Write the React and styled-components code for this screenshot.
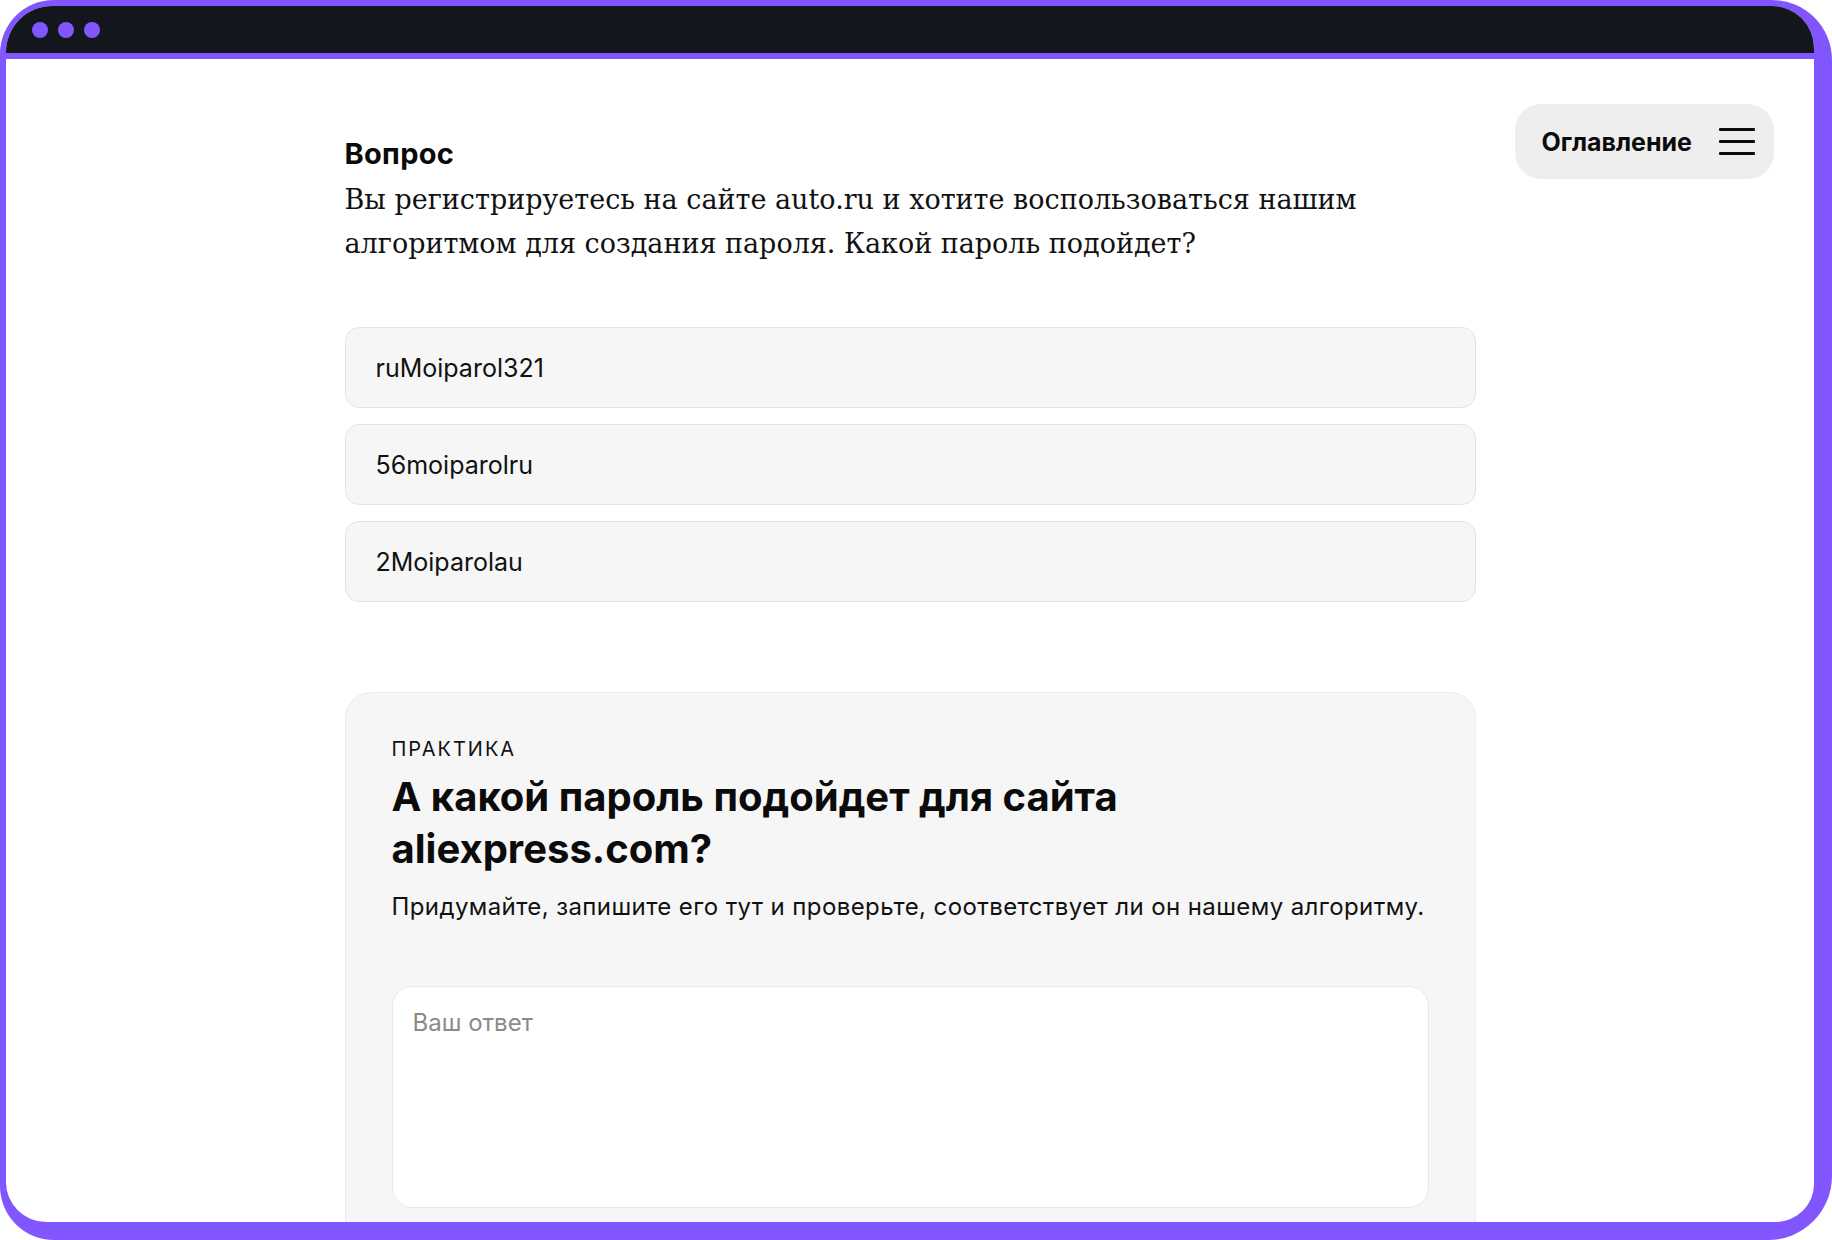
import React from 'react'
import styled, { createGlobalStyle } from 'styled-components'

const purple = '#8256ff'

const GlobalStyle = createGlobalStyle`
    html, body {
        margin: 0;
        padding: 0;
        background: #ffffff;
    }
    * {
        box-sizing: border-box;
    }
`

const options = ['ruMoiparol321', '56moiparolru', '2Moiparolau']

const App = () => {
  return (
    <>
      <GlobalStyle />
      <Frame>
        <Window>
          <TitleBar>
            <Dot />
            <Dot />
            <Dot />
          </TitleBar>

          <Page>
            <TocButton type="button">
              Оглавление
              <Burger>
                <span />
                <span />
                <span />
              </Burger>
            </TocButton>

            <Column>
              <Heading>Вопрос</Heading>
              <Prompt>
                Вы регистрируетесь на сайте auto.ru и хотите воспользоваться нашим
                алгоритмом для создания пароля. Какой пароль подойдет?
              </Prompt>

              <Options>
                {options.map((o) => (
                  <Option key={o}>{o}</Option>
                ))}
              </Options>

              <Practice>
                <Eyebrow>Практика</Eyebrow>
                <PracticeTitle>
                  А какой пароль подойдет для сайта
                  <br />
                  aliexpress.com?
                </PracticeTitle>
                <PracticeText>
                  Придумайте, запишите его тут и проверьте, соответствует ли он нашему алгоритму.
                </PracticeText>
                <Answer placeholder="Ваш ответ" />
                <Spacer />
              </Practice>
            </Column>
          </Page>
        </Window>
      </Frame>
    </>
  )
}

const Frame = styled.div`
    width: 1832px;
    height: 1240px;
    padding: 6px 18px 18px 6px;
    background: ${purple};
    border-radius: 54px 60px 64px 54px;
`
const Window = styled.div`
    display: flex;
    flex-direction: column;
    height: 100%;
    background: #ffffff;
    border-radius: 46px 42px 38px 40px;
    overflow: hidden;
`
const TitleBar = styled.div`
    flex: none;
    display: flex;
    align-items: center;
    gap: 10px;
    height: 53px;
    padding-left: 26px;
    background: #13161d;
    border-bottom: 6px solid ${purple};
`
const Dot = styled.span`
    width: 16px;
    height: 16px;
    border-radius: 50%;
    background: ${purple};
`
const Page = styled.div`
    position: relative;
    flex: 1;
    overflow: hidden;
    padding-top: 78px;
`
const TocButton = styled.button`
    position: absolute;
    top: 45px;
    right: 40px;
    display: flex;
    align-items: center;
    gap: 27px;
    height: 75px;
    padding: 0 19px 0 26px;
    border: none;
    border-radius: 26px;
    background: #eeeeee;
    color: #0b0b0b;
    font-family: Inter, "Liberation Sans", sans-serif;
    font-size: 25px;
    font-weight: 700;
    cursor: pointer;
`
const Burger = styled.span`
    display: flex;
    flex-direction: column;
    gap: 9px;
    width: 36px;
    span{
        height: 3px;
        background: #0b0b0b;
        border-radius: 1px;
    }
`
const Column = styled.div`
    width: 1131px;
    margin: 0 auto;
    font-family: Inter, "Liberation Sans", sans-serif;
    color: #0b0b0b;
`
const Heading = styled.h2`
    margin: 0;
    font-size: 29px;
    line-height: 34px;
    font-weight: 700;
    letter-spacing: 0.3px;
`
const Prompt = styled.p`
    margin: 7px 0 0;
    font-family: "DejaVu Serif", "Liberation Serif", serif;
    font-size: 27px;
    line-height: 44px;
    color: #111111;
`
const Options = styled.div`
    display: grid;
    gap: 16px;
    margin-top: 61px;
`
const Option = styled.div`
    display: flex;
    align-items: center;
    height: 81px;
    padding: 0 30px;
    background: #f6f6f6;
    border: 1px solid #e4e4e4;
    border-radius: 14px;
    font-size: 25px;
    color: #111111;
`
const Practice = styled.section`
    margin-top: 90px;
    padding: 44px 46px 46px;
    background: #f6f6f6;
    border: 1px solid #ececec;
    border-radius: 26px;
`
const Eyebrow = styled.div`
    font-size: 20px;
    line-height: 24px;
    letter-spacing: 0.1em;
    text-transform: uppercase;
    color: #111111;
`
const PracticeTitle = styled.h3`
    margin: 10px 0 0;
    font-size: 40px;
    line-height: 52px;
    font-weight: 700;
`
const PracticeText = styled.p`
    margin: 16px 0 0;
    font-size: 24px;
    line-height: 32px;
    letter-spacing: 0.4px;
    color: #111111;
`
const Answer = styled.textarea`
    display: block;
    width: 100%;
    height: 222px;
    margin-top: 63px;
    padding: 20px 20px;
    background: #ffffff;
    border: 1px solid #e8e8e8;
    border-radius: 20px;
    font-family: Inter, "Liberation Sans", sans-serif;
    font-size: 24px;
    line-height: 32px;
    resize: none;
    outline: none;
    &::placeholder{
        color: #8a8a8a;
    }
`
const Spacer = styled.div`
    height: 200px;
`

export default App
